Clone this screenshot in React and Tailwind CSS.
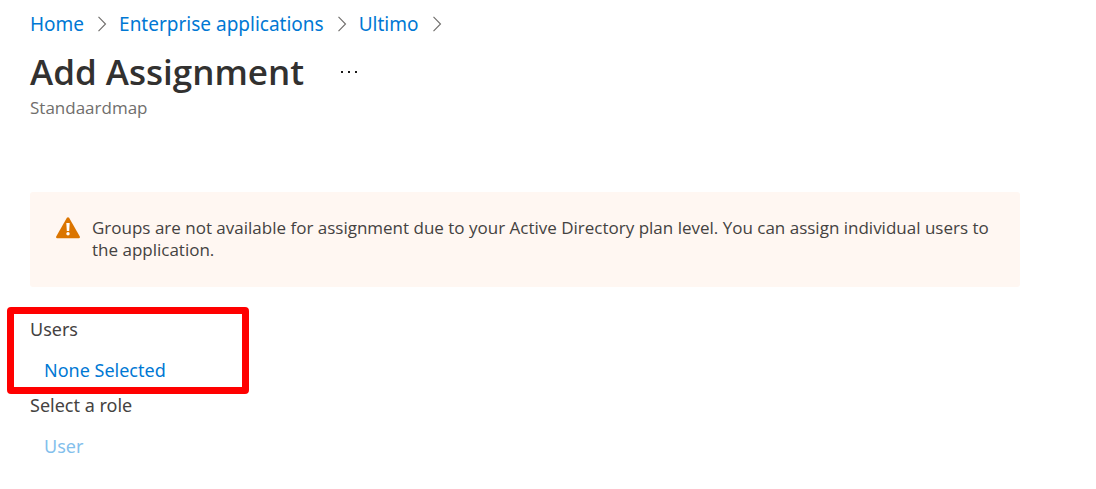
import React from "react";

function Chevron() {
  return (
    <svg className="h-4 w-2.5 shrink-0" viewBox="0 0 10 16" fill="none" stroke="#6e6c6a" strokeWidth="1.1" aria-hidden="true">
      <path d="M1.5 0.8l7 7.2-7 7.2" />
    </svg>
  );
}

function WarningIcon() {
  return (
    <svg className="h-[22px] w-6 shrink-0" viewBox="0 0 24 22" aria-hidden="true">
      <path d="M10.9 0.8Q12 -0.5 13.1 0.8L23.8 19.6Q24.3 21.2 22.8 21.3H1.2Q-0.3 21.2 0.2 19.6Z" fill="#db7500" />
      <path d="M10.3 6h3.4l-.5 8h-2.4z" fill="#fff" />
      <circle cx="12" cy="16.8" r="1.7" fill="#fff" />
    </svg>
  );
}

const crumbs = ["Home", "Enterprise applications", "Ultimo"];

export default function App() {
  return (
    <main className="bg-white px-[30px] pb-6 pt-3 font-['Open_Sans','Noto_Sans',sans-serif] text-[#323130]">
      <nav aria-label="Breadcrumb">
        <ol className="flex items-center gap-3 font-['Noto_Sans',sans-serif] text-[19px] leading-6">
          {crumbs.map((c) => (
            <li key={c} className="flex items-center gap-[13px]">
              <a href="#" className="text-[#0078d4]">{c}</a>
              <Chevron />
            </li>
          ))}
        </ol>
      </nav>
      <header className="mt-4">
        <div className="flex items-center gap-9">
          <h1 className="text-[35px] font-semibold leading-10">Add Assignment</h1>
          <button type="button" aria-label="More" className="flex">
            <svg className="h-1 w-[18px]" viewBox="0 0 18 4" fill="#1b1a19" aria-hidden="true">
              <path d="M1 1h2v2H1zM8 1h2v2H8zM15 1h2v2h-2z" />
            </svg>
          </button>
        </div>
        <p className="mt-1 text-[17px] leading-6 text-[#706e6c]">Standaardmap</p>
      </header>
      <div role="alert" className="mr-[46px] mt-[72px] flex gap-3 rounded-[3px] bg-[#fff7f2] pb-[26px] pl-[26px] pr-4 pt-[25px] text-[17px] leading-[22px] text-[#444241]">
        <WarningIcon />
        <p>Groups are not available for assignment due to your Active Directory plan level. You can assign individual users to the application.</p>
      </div>
      <div className="mt-[30px] flex flex-col gap-[11px] font-['Noto_Sans',sans-serif] text-[18px] leading-6 text-[#444241]">
        <section className="relative flex flex-col items-start gap-[17px]">
          <h2>Users</h2>
          <button type="button" className="ml-3.5 text-[#0078d4]">None Selected</button>
          <div className="pointer-events-none absolute -bottom-3 -left-[23px] -top-2.5 w-[242px] rounded-[4px] border-[7px] border-[#f00]" />
        </section>
        <section className="flex flex-col items-start gap-[17px]">
          <h2>Select a role</h2>
          <button type="button" className="ml-3.5 text-[#83bfec]">User</button>
        </section>
      </div>
    </main>
  );
}
